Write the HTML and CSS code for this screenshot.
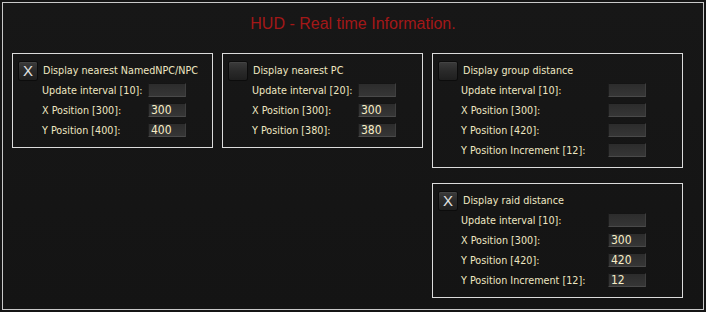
FILE: index.html
```html
<!DOCTYPE html>
<html>
<head>
<meta charset="utf-8">
<link rel="stylesheet" href="styles.css">
</head>
<body>
<div class="frame">
  <div class="title">HUD - Real time Information.</div>
  <div class="panels">
    <div class="panel narrow">
      <div class="check-row"><span class="box">X</span><span class="label">Display nearest NamedNPC/NPC</span></div>
      <div class="row"><span class="rlabel">Update interval [10]:</span><span class="input"></span></div>
      <div class="row"><span class="rlabel">X Position [300]:</span><span class="input">300</span></div>
      <div class="row"><span class="rlabel">Y Position [400]:</span><span class="input">400</span></div>
    </div>
    <div class="panel narrow">
      <div class="check-row"><span class="box"></span><span class="label">Display nearest PC</span></div>
      <div class="row"><span class="rlabel">Update interval [20]:</span><span class="input"></span></div>
      <div class="row"><span class="rlabel">X Position [300]:</span><span class="input">300</span></div>
      <div class="row"><span class="rlabel">Y Position [380]:</span><span class="input">380</span></div>
    </div>
    <div class="stack">
      <div class="panel wide">
        <div class="check-row"><span class="box"></span><span class="label">Display group distance</span></div>
        <div class="row"><span class="rlabel">Update interval [10]:</span><span class="input"></span></div>
        <div class="row"><span class="rlabel">X Position [300]:</span><span class="input"></span></div>
        <div class="row"><span class="rlabel">Y Position [420]:</span><span class="input"></span></div>
        <div class="row"><span class="rlabel">Y Position Increment [12]:</span><span class="input"></span></div>
      </div>
      <div class="panel wide">
        <div class="check-row"><span class="box">X</span><span class="label">Display raid distance</span></div>
        <div class="row"><span class="rlabel">Update interval [10]:</span><span class="input"></span></div>
        <div class="row"><span class="rlabel">X Position [300]:</span><span class="input">300</span></div>
        <div class="row"><span class="rlabel">Y Position [420]:</span><span class="input">420</span></div>
        <div class="row"><span class="rlabel">Y Position Increment [12]:</span><span class="input">12</span></div>
      </div>
    </div>
  </div>
</div>
</body>
</html>
```

FILE: styles.css
```css
html, body {
  margin: 0;
  padding: 0;
  background: #151515;
}
body {
  width: 706px;
  height: 312px;
  font-family: "DejaVu Sans Condensed", "DejaVu Sans", sans-serif;
  font-stretch: condensed;
  color: #efe7c2;
}
.frame {
  box-sizing: border-box;
  margin: 2px 0 0 2px;
  width: 702px;
  height: 308px;
  border: 1px solid #c9c9c9;
  background: linear-gradient(180deg, #171717 0%, #141414 100%);
}
.title {
  height: 50px;
  box-sizing: border-box;
  padding-top: 11px;
  text-align: center;
  font-family: "Liberation Sans", Arial, sans-serif;
  font-stretch: normal;
  font-size: 16px;
  line-height: 20px;
  color: #a31818;
}
.panels {
  display: grid;
  grid-template-columns: 201px 201px 251px;
  column-gap: 9px;
  align-items: start;
  padding-left: 9px;
}
.stack {
  display: flex;
  flex-direction: column;
  gap: 15px;
}
.panel {
  box-sizing: border-box;
  border: 1px solid #dcdcdc;
  padding: 8px 0 7px 0;
}
.narrow .check-row { padding-left: 6px; }
.narrow .row { padding-left: 29px; }
.narrow .rlabel { width: 106px; }
.wide .check-row { padding-left: 6px; }
.wide .row { padding-left: 28px; }
.wide .rlabel { width: 147px; }
.check-row {
  display: flex;
  align-items: center;
  height: 18px;
}
.box {
  flex: none;
  box-sizing: border-box;
  width: 18px;
  height: 18px;
  border-radius: 2px;
  background: linear-gradient(180deg, #3b3b3b 0%, #2a2a2a 50%, #1f1f1f 100%);
  box-shadow: inset 0 1px 0 #444, 0 0 0 1px #0c0c0c;
  color: #e2e2e2;
  font-family: "Liberation Sans", sans-serif;
  font-stretch: normal;
  font-size: 15px;
  line-height: 18px;
  text-align: center;
}
.label {
  margin-left: 6px;
  font-size: 10.7px;
  line-height: 14px;
  white-space: nowrap;
}
.row {
  display: flex;
  align-items: center;
  height: 20px;
  font-size: 10.7px;
}
.rlabel {
  flex: none;
  white-space: nowrap;
}
.input {
  flex: none;
  box-sizing: border-box;
  width: 38px;
  height: 14px;
  border-top: 1px solid #141414;
  border-left: 1px solid #1c1c1c;
  border-bottom: 1px solid #4a4a4a;
  border-right: 1px solid #3e3e3e;
  background: linear-gradient(180deg, #2c2c2c 0%, #363636 100%);
  color: #f6eec6;
  font-size: 12px;
  line-height: 13px;
  padding-left: 2px;
}
```
